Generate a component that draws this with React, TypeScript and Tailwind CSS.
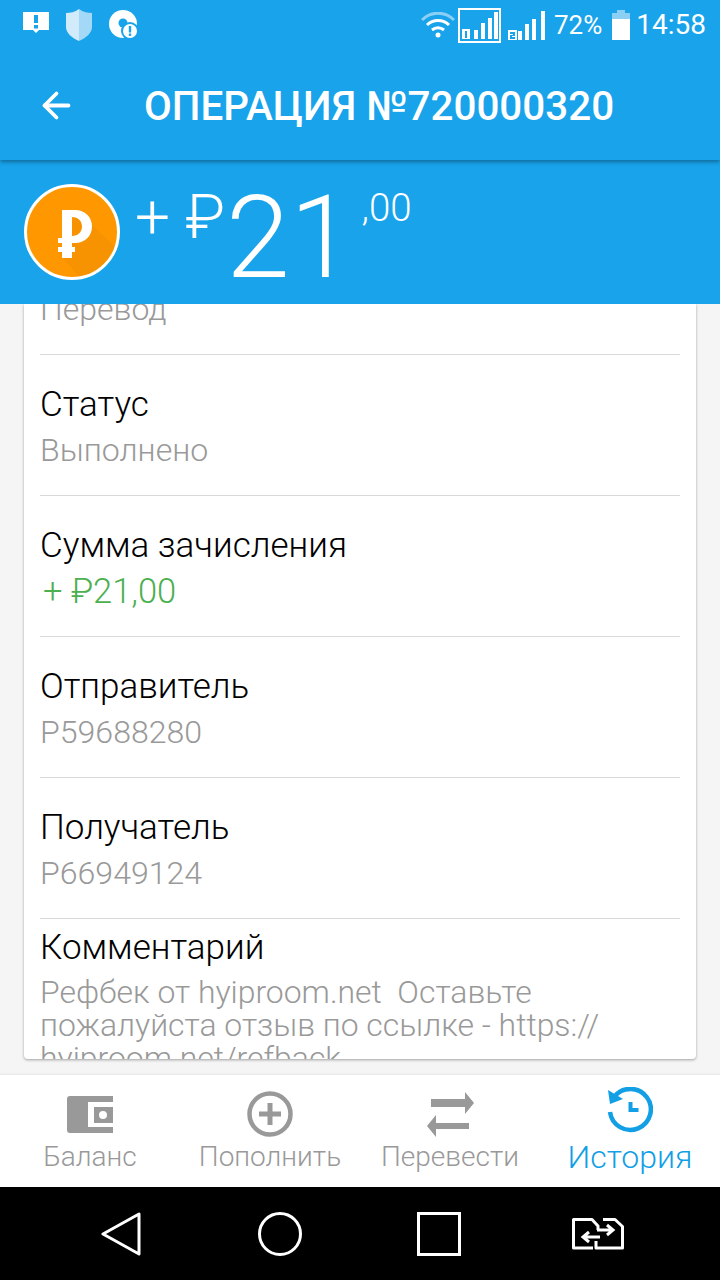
import type { ReactNode } from 'react';
import { ArrowLeft } from 'lucide-react';

const ROBOTO = 'font-[Roboto,"Noto_Sans",sans-serif]';

function StatusBar() {
  return (
    <div className="flex h-[50px] items-center justify-between pl-[22px] pr-[14px] text-white">
      <div className="flex items-center gap-[15px]">
        <svg width="28" height="28" viewBox="0 0 28 28">
          <path d="M1 1h26v18H17l-3 3-3-3H1z" fill="#fff" />
          <rect x="12" y="4" width="4" height="8" fill="#18a3eb" />
          <rect x="12" y="14" width="4" height="3.5" fill="#18a3eb" />
        </svg>
        <svg width="28" height="34" viewBox="0 0 28 34">
          <path d="M14 1C10 4 5 5 1 5v14c0 6 6 11 13 14z" fill="#d2ebfb" />
          <path d="M14 1c4 3 9 4 13 4v14c0 6-6 11-13 14z" fill="#a3d8f7" />
        </svg>
        <svg width="30" height="30" viewBox="0 0 30 30" className="ml-[1px]">
          <circle cx="14" cy="14" r="14" fill="#fff" />
          <circle cx="14" cy="13" r="4.500" fill="#18a3eb" />
          <circle cx="21" cy="21" r="9" fill="#18a3eb" />
          <circle cx="21" cy="21" r="7" fill="#fff" />
          <rect x="19.800" y="16" width="2.400" height="6.500" fill="#18a3eb" />
          <rect x="19.800" y="23.500" width="2.400" height="2.400" fill="#18a3eb" />
        </svg>
      </div>
      <div className="flex items-center">
        <svg width="34" height="26" viewBox="0 0 34 26" className="mr-[3px]">
          <path d="M1 8C10-1 24-1 33 8" fill="none" stroke="#8ccff5" strokeWidth="3" />
          <path d="M6 13c6-6 16-6 22 0" fill="none" stroke="#fff" strokeWidth="3" />
          <path d="M11 18c3.500-3 8.500-3 12 0" fill="none" stroke="#fff" strokeWidth="3" />
          <circle cx="17" cy="23" r="2.500" fill="#fff" />
        </svg>
        <svg width="44" height="35" viewBox="0 0 44 35" className="mr-[6px]">
          <rect x="1" y="1" width="41" height="33" fill="none" stroke="#fff" strokeWidth="2" />
          <rect x="4" y="21" width="8" height="10" fill="#fff" />
          <rect x="7" y="23" width="2" height="7" fill="#18a3eb" />
          <rect x="16" y="22" width="4" height="9" fill="#fff" />
          <rect x="23" y="15" width="4" height="16" fill="#fff" />
          <rect x="30" y="10" width="4" height="21" fill="#fff" />
          <rect x="36" y="4" width="4" height="27" fill="#fff" />
        </svg>
        <svg width="38" height="29" viewBox="0 0 38 29" className="mr-[8px]">
          <rect x="0" y="19" width="9" height="10" fill="#fff" />
          <path d="M2 21h5v4H4v1h3v2H2v-4h3v-1H2z" fill="#18a3eb" />
          <rect x="10" y="20" width="4" height="9" fill="#fff" />
          <rect x="17" y="13" width="4" height="16" fill="#fff" />
          <rect x="24" y="8" width="4" height="21" fill="#fff" />
          <rect x="33" y="0" width="4" height="29" fill="#fff" />
        </svg>
        <span className="text-[26px] leading-none">72%</span>
        <svg width="18" height="30" viewBox="0 0 18 30" className="ml-[10px] mr-[6px]">
          <path d="M5 0h8v3h5v6H0V3h5z" fill="#8ccff5" />
          <rect x="0" y="9" width="18" height="21" fill="#fff" />
        </svg>
        <span className="text-[28px] leading-none">14:58</span>
      </div>
    </div>
  );
}

function Field({ label, value, valueClass }: { label: string; value: string; valueClass?: string }) {
  return (
    <div className="h-[141px] border-b border-[#d9d9d9] pt-[28px]">
      <div className="text-[35px] font-light leading-[44px] text-black">{label}</div>
      <div className={`font-light leading-[47px] ${valueClass ?? 'text-[32.1px] text-[#999999]'}`}>{value}</div>
    </div>
  );
}

function BottomTab({ label, active, icon }: { label: string; active?: boolean; icon: ReactNode }) {
  return (
    <div className={`flex flex-1 flex-col items-center ${active ? 'text-[#129fe6]' : 'text-[#999999]'}`}>
      <div className="flex h-[62px] items-end">{icon}</div>
      <span className={`whitespace-nowrap font-light leading-[40px] ${active ? 'text-[32px]' : 'text-[28px]'}`}>
        {label}
      </span>
    </div>
  );
}

export default function App() {
  return (
    <div className={`flex h-[1280px] w-[720px] flex-col overflow-hidden bg-[#f5f5f5] ${ROBOTO}`}>
      <div className="relative z-20 h-[160px] bg-[#18a3eb] shadow-[0_2px_4px_rgba(0,0,0,0.35)]">
        <StatusBar />
        <div className="flex h-[110px] items-center pl-[36px] text-white">
          <ArrowLeft size={41} strokeWidth={2.2} />
          <span className="ml-[67px] mt-[4px] text-[40.4px] font-medium leading-none">ОПЕРАЦИЯ №720000320</span>
        </div>
      </div>

      <div className="relative z-10 flex h-[144px] items-start bg-[#18a3eb] pl-[24px] pt-[24px] text-white">
        <div className="flex h-[96px] w-[96px] items-center justify-center overflow-hidden rounded-full border-[3px] border-white bg-[#ff9800]">
          <svg width="90" height="90" viewBox="0 0 90 90">
            <path d="M50 24 90 62v28H52L31 65z" fill="#f08c00" opacity="0.5" />
            <path
              d="M35 23h13c10 0 17 7 17 16.500S58 56 48 56h-3v4h3v5h-3v6H35v-6h-4v-5h4v-4h-4v-5h4zm10 7v19c6 0 10-4 10-9.500S51 30 45 30z"
              fill="#fff"
              fillRule="evenodd"
            />
          </svg>
        </div>
        <span className="ml-[15px] mt-[1px] text-[62px] font-light leading-[64px]">+ ₽</span>
        <span className="ml-[1px] mt-[-14px] text-[115px] font-light leading-[136px]">21</span>
        <span className="ml-[8px] mt-[0px] text-[38.5px] font-light leading-[48px]">,00</span>
      </div>

      <div className="min-h-0 flex-1 px-[24px]">
        <div className="h-[755px] overflow-hidden rounded-b-[4px] bg-white px-[16px] shadow-[0_1px_3px_rgba(0,0,0,0.35)]">
          <div className="h-[51px] overflow-hidden border-b border-[#d9d9d9]">
            <div className="mt-[-18px] text-[32px] font-light leading-[47px] text-[#999999]">Перевод</div>
          </div>
          <Field label="Статус" value="Выполнено" />
          <Field label="Сумма зачисления" value="+ ₽21,00" valueClass="ml-[3px] text-[34.5px] text-[#4caf50]" />
          <Field label="Отправитель" value="P59688280" />
          <Field label="Получатель" value="P66949124" />
          <div className="pt-[7px]">
            <div className="text-[35px] font-light leading-[44px] text-black">Комментарий</div>
            <div className="mt-[6px] text-[31.9px] font-light leading-[33px] text-[#999999]">
              Рефбек от hyiproom.net&nbsp; Оставьте
              <br />
              пожалуйста отзыв по ссылке - https://
              <br />
              hyiproom.net/refback
            </div>
          </div>
        </div>
      </div>

      <div className="flex h-[112px] bg-white shadow-[0_-1px_2px_rgba(0,0,0,0.06)]">
        <BottomTab
          label="Баланс"
          icon={
            <svg width="46" height="37" viewBox="0 0 46 37" className="mb-[4px]">
              <path d="M3 0h43v6H21v25h25v6H3a3 3 0 0 1-3-3V3a3 3 0 0 1 3-3z" fill="currentColor" />
              <path d="M27 11h19v16H27zm9 4a4 4 0 1 0 0 8 4 4 0 0 0 0-8z" fill="currentColor" fillRule="evenodd" />
            </svg>
          }
        />
        <BottomTab
          label="Пополнить"
          icon={
            <svg width="46" height="46" viewBox="0 0 46 46">
              <circle cx="23" cy="23" r="20.500" fill="none" stroke="currentColor" strokeWidth="4.500" />
              <path d="M23 12v22M12 23h22" fill="none" stroke="currentColor" strokeWidth="5" />
            </svg>
          }
        />
        <BottomTab
          label="Перевести"
          icon={
            <svg width="47" height="45" viewBox="0 0 47 45">
              <path d="M4 7h34V0l9 11-9 11v-7H4z" fill="currentColor" />
              <path d="M42 31H9v-8L0 34l9 11v-8h33z" fill="currentColor" />
            </svg>
          }
        />
        <BottomTab
          active
          label="История"
          icon={
            <svg width="46" height="46" viewBox="0 0 46 46" className="mb-[4px]">
              <path d="M7 10A20.500 20.500 0 1 1 3 25" fill="none" stroke="currentColor" strokeWidth="4.500" />
              <path d="M1 3l2 14 13-5z" fill="currentColor" />
              <path d="M23.500 15v8h8" fill="none" stroke="currentColor" strokeWidth="4" />
            </svg>
          }
        />
      </div>

      <div className="flex h-[93px] items-center bg-black pl-[101px]">
        <svg width="40" height="44" viewBox="0 0 40 44">
          <path d="M38 2v40L2 22z" fill="none" stroke="#fff" strokeWidth="3" strokeLinejoin="round" />
        </svg>
        <svg width="44" height="44" viewBox="0 0 44 44" className="ml-[117px]">
          <circle cx="22" cy="22" r="20.500" fill="none" stroke="#fff" strokeWidth="3" />
        </svg>
        <svg width="44" height="44" viewBox="0 0 44 44" className="ml-[115px]">
          <rect x="1.500" y="1.500" width="41" height="41" fill="none" stroke="#fff" strokeWidth="3" />
        </svg>
        <svg width="52" height="33" viewBox="0 0 52 33" className="ml-[111px]">
          <path
            d="M21 31H1.500V2.500H20L26 9v4M31 2.500h12l7.500 7V31H24v-7"
            fill="none"
            stroke="#fff"
            strokeWidth="3"
            strokeLinejoin="round"
          />
          <path d="M25 13h16M35 8l6 5-6 5M28 20H12M17 15l-6 5 6 5" fill="none" stroke="#fff" strokeWidth="3" />
        </svg>
      </div>
    </div>
  );
}
